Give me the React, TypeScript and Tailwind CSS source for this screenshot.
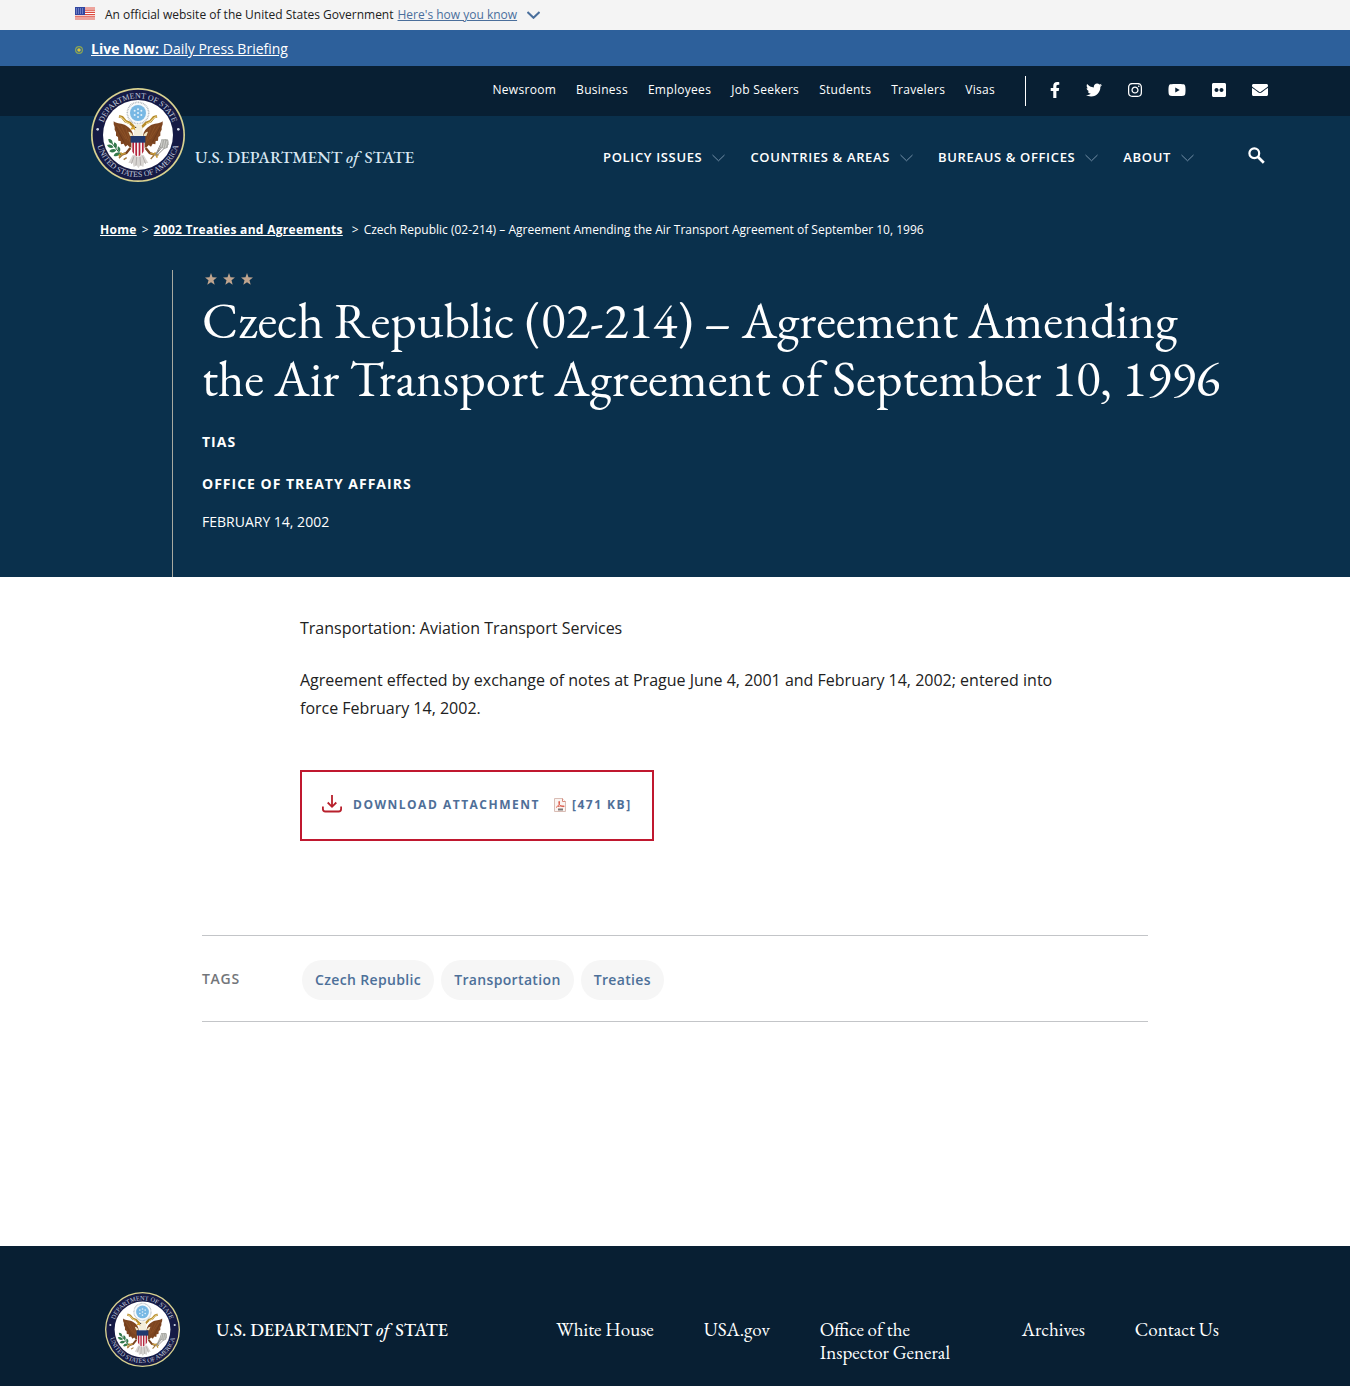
import React from "react";
import {
  FaEnvelope,
  FaFacebookF,
  FaFlickr,
  FaInstagram,
  FaTwitter,
  FaYoutube,
} from "react-icons/fa";

const SERIF = "font-['EB_Garamond','Liberation_Serif',serif]";

function Seal({ id, className }: { id: string; className: string }) {
  return (
    <svg viewBox="35 39 282 282" className={className} role="img" aria-label="Department of State seal">
      <defs>
        <path id={id + "-top"} d="M66 180a110 110 0 0 1 220 0" />
        <path id={id + "-bottom"} d="M50 180a126 126 0 0 0 252 0" />
      </defs>
      <circle cx="176" cy="180" r="141" fill="#d9d290" />
      <circle cx="176" cy="180" r="136" fill="#151a45" />
      <circle cx="176" cy="180" r="105" fill="#ffffff" />
      <g fill="#c3cbdc" fontFamily="Liberation Serif, serif" fontSize="24" textAnchor="middle">
        <text>
          <textPath href={"#" + id + "-top"} startOffset="50%">DEPARTMENT OF STATE</textPath>
        </text>
        <text>
          <textPath href={"#" + id + "-bottom"} startOffset="50%">UNITED STATES OF AMERICA</textPath>
        </text>
      </g>
      <circle cx="55" cy="163" r="4" fill="#d5dbe8" />
      <circle cx="297" cy="163" r="4" fill="#d5dbe8" />
      {/* glory above the eagle */}
      <circle cx="176" cy="114" r="32" fill="none" stroke="#b9bfc4" strokeWidth="5" strokeDasharray="3 2" />
      <circle cx="176" cy="114" r="28" fill="#f3f8fb" />
      <circle cx="176" cy="114" r="24" fill="#78b8e4" />
      <g fill="#e4f2fb">
        <circle cx="166" cy="107" r="3" />
        <circle cx="176" cy="103" r="3" />
        <circle cx="186" cy="107" r="3" />
        <circle cx="166" cy="120" r="3" />
        <circle cx="176" cy="114" r="3" />
        <circle cx="186" cy="120" r="3" />
        <circle cx="176" cy="126" r="3" />
      </g>
      {/* wings */}
      <path d="M103 139c11 9 25 5 38 13 12 7 19 16 21 30v38c-9-1-15-6-17-10l-7 5-5-9-8 2-1-10-7-1-1-11-6-4 0-10-4-8 0-8-3-8z" fill="#7d4520" />
      <path d="M250 139c-11 9-25 5-38 13-12 7-19 16-21 30v38c9-1 15-6 17-10l7 5 5-9 8 2 1-10 7-1 1-11 6-4 0-10 4-8 0-8 3-8z" fill="#7d4520" />
      <path d="M114 152l26 40M125 152l21 45M139 157l13 45M239 152l-26 40M228 152l-21 45M214 157l-13 45" fill="none" stroke="#995c2d" strokeWidth="1.5" />
      <path d="M110 156l24 46M243 156l-24 46" fill="none" stroke="#5b3018" strokeWidth="1.5" />
      {/* scroll */}
      <path d="M119 124l10 3 10 12 13 5 14 14M233 124l-10 3-10 12-13 5-14 14" fill="none" stroke="#b78c2c" strokeWidth="8" strokeLinejoin="round" />
      <path d="M121 125l9 5 10 11 12 6M231 125l-9 5-10 11-12 6" fill="none" stroke="#efdc9a" strokeWidth="3" />
      {/* head and neck */}
      <path d="M164 183v-16c0-11 4-19 12-19 9 0 14 6 14 15v20z" fill="#f3eedc" />
      <path d="M166 155l-9 2-5 7 11-1 5 3z" fill="#d9a631" />
      <circle cx="169" cy="157" r="2" fill="#222222" />
      <path d="M147 170c7 0 12 5 14 13h-9zM206 170c-7 0-12 5-14 13h9z" fill="#f1e6c4" />
      {/* legs, talons and tail */}
      <path d="M153 219l-12 15-14 5M199 219l12 15 14 5" fill="none" stroke="#7a4420" strokeWidth="7" />
      <path d="M139 235l-25 5M213 235l25 5M126 232l-6 16M226 232l8 16" fill="none" stroke="#c69a3b" strokeWidth="5" />
      <path d="M160 240l-13 24 13 0 3 12 9-5 5 9 6-9 9 5 2-12 13 0-14-24z" fill="#d8d5d2" />
      <path d="M164 244l-8 23M172 246l-2 26M182 246l2 26M190 244l9 23" stroke="#8b8584" strokeWidth="1.500" />
      {/* shield */}
      <path d="M156 186h40v34c0 14-9 22-20 27-11-5-20-13-20-27z" fill="#f6f4f4" />
      <path d="M159 200h5v37l-5-7zM168 200h5v44l-5-3zM178 200h5v41l-5 3zM188 200h5v29l-5 7z" fill="#b5233b" />
      <path d="M154 183h44v20h-44z" fill="#20396e" />
      {/* olive branch */}
      <path d="M90 194l34 45" stroke="#2d6540" strokeWidth="3" />
      <path d="M87 192c10 0 13 5 13 14-9 0-13-5-13-14zM83 210c9-4 16 0 20 7-9 5-16 1-20-7zM90 229c5-8 14-9 21-4-4 8-13 10-21 4zM105 202c8 3 10 10 6 18-7-4-9-11-6-18zM116 214c7 3 9 10 5 17-6-4-8-10-5-17zM103 242c3-8 11-11 18-8-2 8-10 12-18 8z" fill="#33794c" />
      {/* arrows */}
      <path d="M265 197l-38 45M258 193l-28 46M249 197l-19 40M268 207l-35 34" stroke="#8d8b87" strokeWidth="3" />
      <path d="M246 193l19 0 3 8-3 17-10 4-14-6z" fill="#a9aaa5" />
      <path d="M249 196l-4 20M256 196l-4 22M263 198l-5 20" stroke="#e3e3df" strokeWidth="2" />
      <path d="M128 241l-9 9M225 240l-11 12M142 248l-9 6" stroke="#a0783b" strokeWidth="4" />
    </svg>
  );
}

function Chevron({ className }: { className: string }) {
  return (
    <svg viewBox="0 0 13 8" className={className} fill="none" stroke="currentColor" aria-hidden="true">
      <path d="M0.5 1l6 5.8L12.5 1" />
    </svg>
  );
}

function SearchIcon() {
  return (
    <svg viewBox="0 0 17 17" className="size-[17px]" fill="none" stroke="currentColor" aria-hidden="true">
      <circle cx="6.300" cy="6.300" r="4.900" strokeWidth="2.200" />
      <path d="M9.800 9.800l6 6" strokeWidth="2.700" />
    </svg>
  );
}

function Flag() {
  return (
    <svg viewBox="0 0 20 13" className="h-[13px] w-5" aria-hidden="true">
      <rect width="20" height="13" fill="#ffffff" />
      <path d="M0 1h20M0 3.2h20M0 5.4h20M0 7.6h20M0 9.8h20M0 12h20" stroke="#dc4a3d" strokeWidth="1.2" />
      <rect width="10" height="8" fill="#3247a0" />
      <path d="M1 2h8M1 4h8M1 6h8" stroke="#a9b4e6" strokeWidth="1" strokeDasharray="1 1" />
    </svg>
  );
}

function Star() {
  return (
    <svg viewBox="0 0 12 12" className="size-3" fill="#bfa48e" aria-hidden="true">
      <path d="M6 0l1.5 4.2L12 4.4 8.5 7.2l1.2 4.5L6 9.2l-3.7 2.5L3.5 7.2 0 4.4l4.5-.2z" />
    </svg>
  );
}

function DownloadIcon() {
  return (
    <svg viewBox="0 0 20 18" className="mb-0.5 h-[18px] w-5" fill="none" stroke="#b8202c" strokeWidth="1.8" aria-hidden="true">
      <path d="M10 0v11.5M5.7 7.5l4.3 4.3 4.3-4.3" />
      <path d="M0.9 11.5v2.5q0 2.5 2.5 2.5h13.2q2.5 0 2.5-2.5v-2.5" />
    </svg>
  );
}

function PdfIcon() {
  return (
    <svg viewBox="0 0 12 14" className="h-3.5 w-3" role="img" aria-label="PDF">
      <path d="M0.5 0.5h8l3 3v10h-11z" fill="#fbf4f1" stroke="#d9bdb5" />
      <path d="M8.5 0.5v3h3" fill="#ffffff" stroke="#d98a7c" />
      <path d="M2 9.5c2.5-1.5 4-4 3.5-6-.8-1-1.2 1 0 3 1 1.5 3 2.5 4.500 2s-3-1-6 0" fill="none" stroke="#d9513f" strokeWidth="0.9" />
      <path d="M4 11.500h5" stroke="#7d7471" strokeWidth="2" />
    </svg>
  );
}

function Wordmark({ className }: { className: string }) {
  return (
    <span className={"font-medium whitespace-nowrap " + SERIF + " " + className}>
      U.S. DEPARTMENT <i className="mr-0.5">of</i> STATE
    </span>
  );
}

const utilityLinks = ["Newsroom", "Business", "Employees", "Job Seekers", "Students", "Travelers", "Visas"];
const menus = ["Policy Issues", "Countries & Areas", "Bureaus & Offices", "About"];
const socials = [
  { name: "Facebook", icon: <FaFacebookF className="h-4 w-2.5" /> },
  { name: "Twitter", icon: <FaTwitter className="h-4 w-4" /> },
  { name: "Instagram", icon: <FaInstagram className="h-4 w-3.5" /> },
  { name: "YouTube", icon: <FaYoutube className="h-4 w-[18px]" /> },
  { name: "Flickr", icon: <FaFlickr className="h-4 w-3.5" /> },
  { name: "Email", icon: <FaEnvelope className="h-4 w-4" /> },
];
const tags = ["Czech Republic", "Transportation", "Treaties"];

export default function App() {
  return (
    <div className="min-h-screen bg-white font-['Open_Sans',sans-serif] text-[#212121]">
      <div className="bg-[#f4f4f4]">
        <div className="mx-auto flex h-[30px] max-w-[1200px] items-center text-xs">
          <span className="mr-2.5 pb-1"><Flag /></span>
          <span>An official website of the United States Government</span>
          <button type="button" className="ml-1 flex items-center gap-2.5 text-[#4a6f9c]">
            <span className="underline">Here's how you know</span>
            <Chevron className="h-2 w-[13px] stroke-2" />
          </button>
        </div>
      </div>

      <div className="bg-[#2d609b]">
        <div className="mx-auto flex h-9 max-w-[1200px] items-center gap-2 pt-0.5 text-sm text-white">
          <svg viewBox="0 0 8 8" className="mt-0.5 size-2" aria-hidden="true">
            <circle cx="4" cy="4" r="3.4" fill="none" stroke="#8ba552" strokeWidth="1.2" />
            <circle cx="4" cy="4" r="1.8" fill="#d9c63d" />
          </svg>
          <a href="#live" className="underline"><b>Live Now:</b> Daily Press Briefing</a>
        </div>
      </div>

      <header className="bg-[#0a304c] text-white">
        <div className="bg-[#081f33]">
          <div className="relative mx-auto flex h-[50px] max-w-[1200px] justify-end pr-[7px]">
            <nav aria-label="Audiences" className="flex h-12 items-center gap-5 text-xs tracking-wide">
              {utilityLinks.map((l) => (
                <a key={l} href="#utility">{l}</a>
              ))}
            </nav>
            <div className="mt-2.5 ml-[30px] flex h-[30px] items-center gap-[26px] border-l border-white pl-6">
              {socials.map((s) => (
                <a key={s.name} href="#social" aria-label={s.name} className="pb-0.5">
                  {s.icon}
                </a>
              ))}
            </div>
            <a href="#home" className="absolute top-[22px] left-4 flex items-end gap-2.5">
              <Seal id="header-seal" className="size-[94px]" />
              <Wordmark className="pb-3 text-[17px] text-[#d9e8f3]" />
            </a>
          </div>
        </div>

        <div className="mx-auto flex h-[84px] max-w-[1200px] items-center justify-end pr-2.5">
          <nav aria-label="Main" className="flex gap-[25px]">
            {menus.map((m) => (
              <button key={m} type="button" className="flex items-center gap-2.5 text-[13px] font-semibold tracking-wider uppercase">
                {m}
                <Chevron className="h-2 w-[13px] text-[#7590a8]" />
              </button>
            ))}
          </nav>
          <button type="button" aria-label="Search" className="ml-[54px] pb-1.5">
            <SearchIcon />
          </button>
        </div>

        <nav aria-label="Breadcrumb" className="mx-auto flex max-w-[1200px] gap-[5px] px-[25px] pt-[22px] text-xs leading-4">
          <a href="#home" className="font-bold tracking-wide underline">Home</a>
          <span>&gt;</span>
          <a href="#treaties" className="mr-1 font-bold tracking-wide underline">2002 Treaties and Agreements</a>
          <span>&gt;</span>
          <span>Czech Republic (02-214) – Agreement Amending the Air Transport Agreement of September 10, 1996</span>
        </nav>

        <div className="mx-auto max-w-[1200px] pt-8 pl-[97px]">
          <div className="border-l border-[#a8a9a0] pb-[45px] pl-[29px]">
            <div className="flex gap-1.5 pt-[3px] pl-[3px]">
              <Star /><Star /><Star />
            </div>
            <h1 className={"mt-1.5 text-[51px] leading-[58px] " + SERIF}>
              Czech Republic (02-214) – Agreement Amending<br />
              the Air Transport Agreement of September 10, 1996
            </h1>
            <p className="mt-[25px] text-sm leading-5 font-bold tracking-[1px]">TIAS</p>
            <p className="mt-[22px] text-sm leading-5 font-bold tracking-[1px]">OFFICE OF TREATY AFFAIRS</p>
            <p className="mt-[18px] text-sm leading-5">FEBRUARY 14, 2002</p>
          </div>
        </div>
      </header>

      <main>
        <div className="mx-auto max-w-[770px] pt-[37px] pl-2.5 text-base leading-7">
          <p>Transportation: Aviation Transport Services</p>
          <p className="mt-6">
            Agreement effected by exchange of notes at Prague June 4, 2001 and February 14, 2002; entered into force
            February 14, 2002.
          </p>
          <a
            href="#download"
            className="mt-12 inline-flex h-[71px] items-center border-2 border-[#c0182f] px-5 pb-0.5 text-xs font-bold tracking-[1.5px] text-[#4f6f98]"
          >
            <DownloadIcon />
            <span className="ml-[11px]">DOWNLOAD ATTACHMENT</span>
            <span className="mr-1.5 ml-3.5"><PdfIcon /></span>
            <span>[471 KB]</span>
          </a>
        </div>

        <section className="mx-auto mt-[94px] mb-56 flex h-[87px] max-w-[946px] items-center border-y border-[#c3c5c8]">
          <h2 className="w-[100px] text-sm font-semibold tracking-wider text-[#73767a]">TAGS</h2>
          <ul className="flex gap-[7px] pt-0.5">
            {tags.map((t) => (
              <li key={t}>
                <a href="#tag" className="flex h-10 items-center rounded-full bg-[#f6f6f6] px-[13px] text-sm font-semibold tracking-wide text-[#4d7099]">{t}</a>
              </li>
            ))}
          </ul>
        </section>
      </main>

      <footer className="bg-[#081f33] text-white">
        <div className="mx-auto flex max-w-[1200px] justify-between pt-[46px] pr-14 pb-[19px] pl-[30px]">
          <a href="#home" className="flex items-center gap-9">
            <Seal id="footer-seal" className="size-[75px]" />
            <Wordmark className="text-[18px]" />
          </a>
          <nav aria-label="Footer" className={"flex gap-[50px] pt-[26px] text-[19px] leading-[23px] " + SERIF}>
            <a href="#whitehouse">White House</a>
            <a href="#usa">USA.gov</a>
            <a href="#oig" className="w-[152px]">Office of the Inspector General</a>
            <a href="#archives">Archives</a>
            <a href="#contact">Contact Us</a>
          </nav>
        </div>
      </footer>
    </div>
  );
}
